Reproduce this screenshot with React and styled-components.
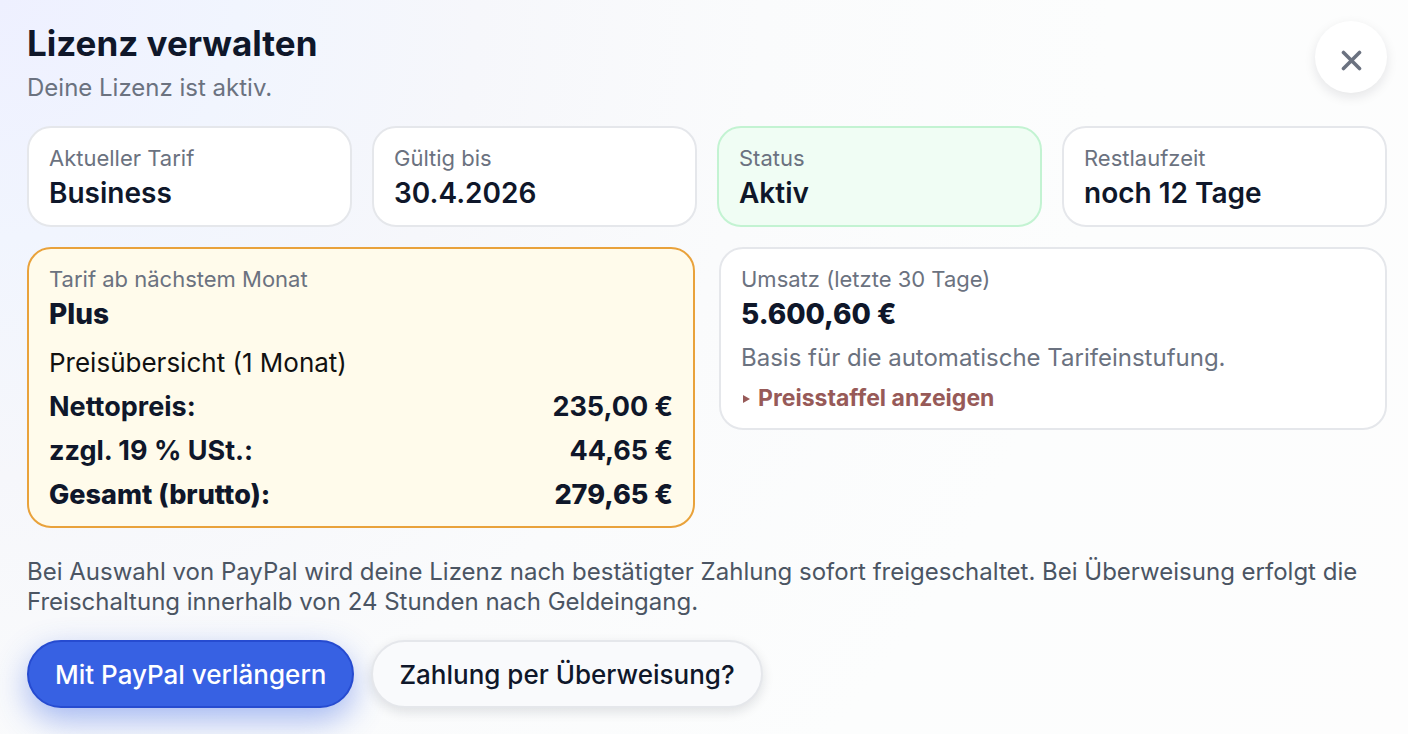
// ------------------------------
// File: App.jsx
// ------------------------------
// Description: License management dialog (current plan, next plan, renewal).
// ------------------------------

// ------------------------------
// Imports
// ------------------------------
import styled, { createGlobalStyle } from 'styled-components';

// ------------------------------
// Styled Components
// ------------------------------
const GlobalStyle = createGlobalStyle`
  * {
    box-sizing: border-box;
  }

  body {
    margin: 0;
    font-family: Inter, 'Liberation Sans', sans-serif;
    color: #0f172a;
    -webkit-font-smoothing: antialiased;
  }
`;

const Dialog = styled.main`
  min-height: 100vh;
  padding: 21px 21px 26px 27px;
  background: radial-gradient(
      circle at top left,
      #eef0ff 0%,
      #f1f5fe 15%,
      #f6f7fb 30%,
      #fafbfc 48%,
      #fcfdfd 70%,
      #fdfdfd 100%
    );
`;

const Header = styled.header`
  display: flex;
  justify-content: space-between;
  align-items: flex-start;
  height: 105px;
`;

const Title = styled.h1`
  margin: 0;
  font-size: 35px;
  line-height: 44px;
  font-weight: 700;
`;

const Subtitle = styled.p`
  margin: 8px 0 0;
  font-size: 24px;
  line-height: 30px;
  color: #6b7280;
`;

const CloseButton = styled.button`
  display: flex;
  align-items: center;
  justify-content: center;
  width: 72px;
  height: 72px;
  padding: 6px 0 0;
  border: 0;
  border-radius: 50%;
  background: #ffffff;
  color: #6b7280;
  box-shadow: 0 4px 12px rgba(15, 23, 42, 0.1);
  cursor: pointer;
`;

const Stats = styled.section`
  display: grid;
  grid-template-columns: repeat(4, 1fr);
  gap: 20px;
  margin-bottom: 20px;
`;

const Panels = styled.section`
  display: grid;
  grid-template-columns: repeat(2, 1fr);
  align-items: start;
  gap: 24px;
`;

const cardColors = {
  plain: { border: '#e5e7eb', background: '#ffffff' },
  success: { border: '#c3f3d2', background: '#f0fdf4' },
  warning: { border: '#e9a23b', background: '#fffbeb' },
};

const Card = styled.div`
  padding: 16px 20px 15px;
  border: 2px solid ${({ $tone = 'plain' }) => cardColors[$tone].border};
  border-radius: 24px;
  background: ${({ $tone = 'plain' }) => cardColors[$tone].background};
`;

const Label = styled.div`
  font-size: 22px;
  line-height: 28px;
  color: #6b7280;
`;

const Value = styled.div`
  margin-top: 4px;
  font-size: 28px;
  line-height: 34px;
  font-weight: ${({ $strong }) => ($strong ? 800 : 600)};
`;

const PriceTable = styled.table`
  width: 100%;
  margin-top: 10px;
  border-spacing: 0;
  font-size: 27px;
  line-height: 32px;

  caption {
    padding: 6px 0;
    font-size: 26px;
    text-align: left;
    color: #111111;
  }

  th,
  td {
    padding: 6px 0;
    font-weight: 700;
    text-align: left;
  }

  td {
    text-align: right;
  }

  tr:last-child th,
  tr:last-child td {
    padding-bottom: 0;
    font-weight: 800;
  }
`;

const Description = styled.p`
  margin: 12px 0 10px;
  font-size: 24px;
  line-height: 30px;
  color: #6b7280;
`;

const Summary = styled.summary`
  display: flex;
  align-items: center;
  gap: 8px;
  font-size: 23px;
  line-height: 30px;
  font-weight: 700;
  color: #975a58;
  list-style: none;
  cursor: pointer;

  /* small disclosure triangle */
  &::before {
    content: '';
    margin: 2px 0 0 2px;
    border: 4px solid transparent;
    border-left: 7px solid #975a58;
    border-right: 0;
  }
`;

const Note = styled.p`
  margin: 29px 0 23px;
  font-size: 24px;
  line-height: 30px;
  color: #4b5563;
`;

const Actions = styled.div`
  display: flex;
  gap: 17px;
`;

const Button = styled.button`
  height: 68px;
  padding: 2px 26px 0;
  border: 2px solid ${({ $primary }) => ($primary ? '#264bd0' : '#e5e7eb')};
  border-radius: 34px;
  background: ${({ $primary }) => ($primary ? '#3761e3' : '#f9fafc')};
  color: ${({ $primary }) => ($primary ? '#ffffff' : '#0f172a')};
  font-family: inherit;
  font-size: 26px;
  line-height: 32px;
  font-weight: 500;
  box-shadow: ${({ $primary }) =>
    $primary
      ? '0 12px 32px rgba(55, 97, 227, 0.44)'
      : '0 4px 12px rgba(15, 23, 42, 0.12)'};
  cursor: pointer;
`;

// ------------------------------
// Data
// ------------------------------
const stats = [
  { label: 'Aktueller Tarif', value: 'Business' },
  { label: 'Gültig bis', value: '30.4.2026' },
  { label: 'Status', value: 'Aktiv', tone: 'success' },
  { label: 'Restlaufzeit', value: 'noch 12 Tage' },
];

const prices = [
  ['Nettopreis:', '235,00 €'],
  ['zzgl. 19 % USt.:', '44,65 €'],
  ['Gesamt (brutto):', '279,65 €'],
];

// ------------------------------
// Component
// ------------------------------
function App() {
  return (
    <>
      <GlobalStyle />
      <Dialog>
        <Header>
          <div>
            <Title>Lizenz verwalten</Title>
            <Subtitle>Deine Lizenz ist aktiv.</Subtitle>
          </div>
          <CloseButton type="button" aria-label="Schließen">
            <svg width="22" height="22" viewBox="0 0 22 22" fill="none">
              <path
                d="M3.5 3.5L19.5 19.5M19.5 3.5L3.5 19.5"
                stroke="currentColor"
                strokeWidth="3.6"
                strokeLinecap="round"
              />
            </svg>
          </CloseButton>
        </Header>

        <Stats>
          {stats.map(({ label, value, tone }) => (
            <Card key={label} $tone={tone}>
              <Label>{label}</Label>
              <Value>{value}</Value>
            </Card>
          ))}
        </Stats>

        <Panels>
          <Card $tone="warning">
            <Label>Tarif ab nächstem Monat</Label>
            <Value $strong>Plus</Value>
            <PriceTable>
              <caption>Preisübersicht (1 Monat)</caption>
              <tbody>
                {prices.map(([name, amount]) => (
                  <tr key={name}>
                    <th scope="row">{name}</th>
                    <td>{amount}</td>
                  </tr>
                ))}
              </tbody>
            </PriceTable>
          </Card>

          <Card>
            <Label>Umsatz (letzte 30 Tage)</Label>
            <Value $strong>5.600,60 €</Value>
            <Description>Basis für die automatische Tarifeinstufung.</Description>
            <details>
              <Summary>Preisstaffel anzeigen</Summary>
            </details>
          </Card>
        </Panels>

        <Note>
          Bei Auswahl von PayPal wird deine Lizenz nach bestätigter Zahlung
          sofort freigeschaltet. Bei Überweisung erfolgt die Freischaltung
          innerhalb von 24 Stunden nach Geldeingang.
        </Note>

        <Actions>
          <Button type="button" $primary>
            Mit PayPal verlängern
          </Button>
          <Button type="button">Zahlung per Überweisung?</Button>
        </Actions>
      </Dialog>
    </>
  );
}

export default App;
